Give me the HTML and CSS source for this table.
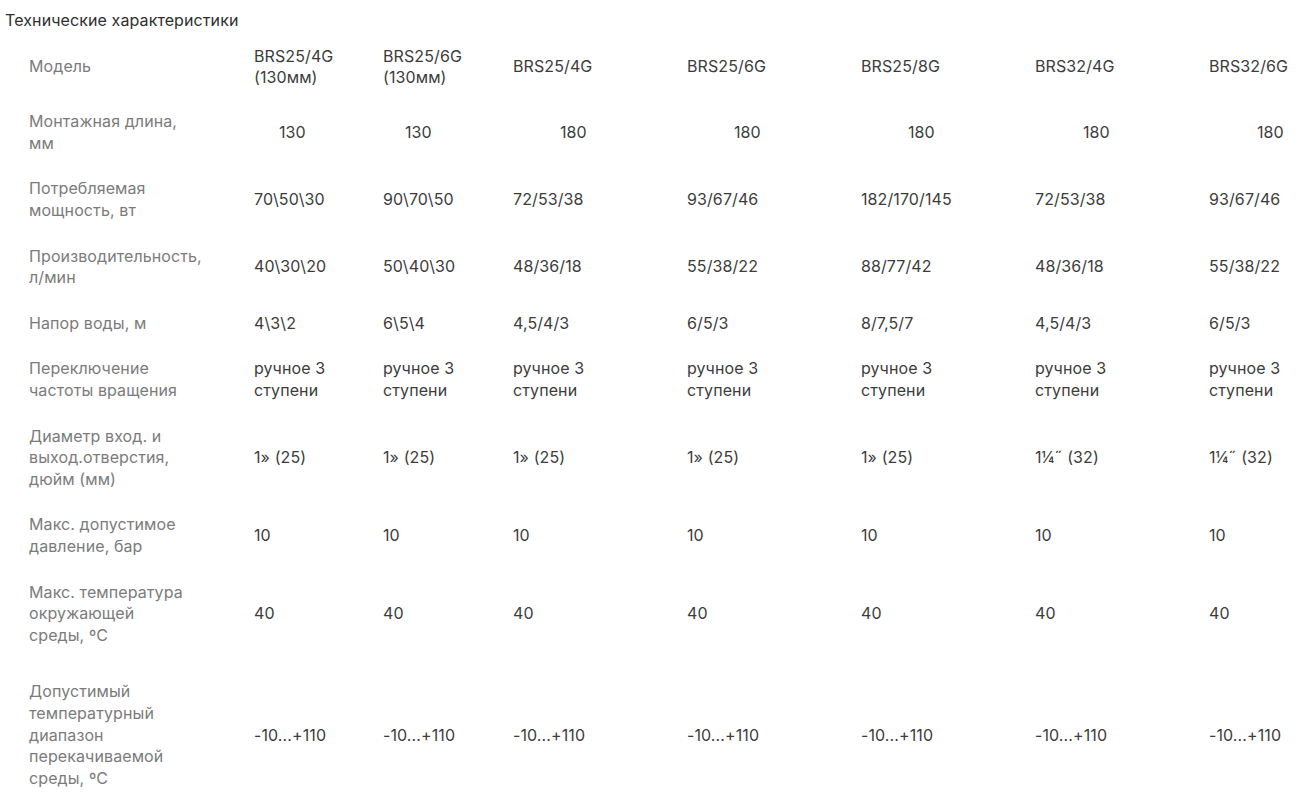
FILE: index.html
```html
<!DOCTYPE html>
<html lang="ru">
<head>
<meta charset="utf-8">
<title>Технические характеристики</title>
<link rel="stylesheet" href="styles.css">
</head>
<body>
<div class="page">
  <div class="title">Технические характеристики</div>
  <table class="specs">
    <colgroup>
      <col class="c-label">
      <col class="c-n1">
      <col class="c-n2">
      <col class="c-w">
      <col class="c-w">
      <col class="c-w">
      <col class="c-w">
      <col>
    </colgroup>
    <tbody>
      <tr class="first">
        <th><div class="lbl">Модель</div></th>
        <td><div class="val">BRS25/4G<br>(130мм)</div></td>
        <td><div class="val">BRS25/6G<br>(130мм)</div></td>
        <td><div class="val">BRS25/4G</div></td>
        <td><div class="val">BRS25/6G</div></td>
        <td><div class="val">BRS25/8G</div></td>
        <td><div class="val">BRS32/4G</div></td>
        <td><div class="val">BRS32/6G</div></td>
      </tr>
      <tr>
        <th><div class="lbl">Монтажная длина,<br>мм</div></th>
        <td><div class="val ind-a">130</div></td>
        <td><div class="val ind-b">130</div></td>
        <td><div class="val ind-c">180</div></td>
        <td><div class="val ind-c">180</div></td>
        <td><div class="val ind-c">180</div></td>
        <td><div class="val ind-d">180</div></td>
        <td><div class="val ind-d">180</div></td>
      </tr>
      <tr>
        <th><div class="lbl">Потребляемая<br>мощность, вт</div></th>
        <td><div class="val">70\50\30</div></td>
        <td><div class="val">90\70\50</div></td>
        <td><div class="val">72/53/38</div></td>
        <td><div class="val">93/67/46</div></td>
        <td><div class="val">182/170/145</div></td>
        <td><div class="val">72/53/38</div></td>
        <td><div class="val">93/67/46</div></td>
      </tr>
      <tr>
        <th><div class="lbl">Производительность,<br>л/мин</div></th>
        <td><div class="val">40\30\20</div></td>
        <td><div class="val">50\40\30</div></td>
        <td><div class="val">48/36/18</div></td>
        <td><div class="val">55/38/22</div></td>
        <td><div class="val">88/77/42</div></td>
        <td><div class="val">48/36/18</div></td>
        <td><div class="val">55/38/22</div></td>
      </tr>
      <tr>
        <th><div class="lbl">Напор воды, м</div></th>
        <td><div class="val">4\3\2</div></td>
        <td><div class="val">6\5\4</div></td>
        <td><div class="val">4,5/4/3</div></td>
        <td><div class="val">6/5/3</div></td>
        <td><div class="val">8/7,5/7</div></td>
        <td><div class="val">4,5/4/3</div></td>
        <td><div class="val">6/5/3</div></td>
      </tr>
      <tr>
        <th><div class="lbl">Переключение<br>частоты вращения</div></th>
        <td><div class="val">ручное 3<br>ступени</div></td>
        <td><div class="val">ручное 3<br>ступени</div></td>
        <td><div class="val">ручное 3<br>ступени</div></td>
        <td><div class="val">ручное 3<br>ступени</div></td>
        <td><div class="val">ручное 3<br>ступени</div></td>
        <td><div class="val">ручное 3<br>ступени</div></td>
        <td><div class="val">ручное 3<br>ступени</div></td>
      </tr>
      <tr>
        <th><div class="lbl">Диаметр вход. и<br>выход.отверстия,<br>дюйм (мм)</div></th>
        <td><div class="val">1» (25)</div></td>
        <td><div class="val">1» (25)</div></td>
        <td><div class="val">1» (25)</div></td>
        <td><div class="val">1» (25)</div></td>
        <td><div class="val">1» (25)</div></td>
        <td><div class="val">1¼˝ (32)</div></td>
        <td><div class="val">1¼˝ (32)</div></td>
      </tr>
      <tr>
        <th><div class="lbl">Макс. допустимое<br>давление, бар</div></th>
        <td><div class="val">10</div></td>
        <td><div class="val">10</div></td>
        <td><div class="val">10</div></td>
        <td><div class="val">10</div></td>
        <td><div class="val">10</div></td>
        <td><div class="val">10</div></td>
        <td><div class="val">10</div></td>
      </tr>
      <tr>
        <th><div class="lbl">Макс. температура<br>окружающей<br>среды, ºC</div></th>
        <td><div class="val">40</div></td>
        <td><div class="val">40</div></td>
        <td><div class="val">40</div></td>
        <td><div class="val">40</div></td>
        <td><div class="val">40</div></td>
        <td><div class="val">40</div></td>
        <td><div class="val">40</div></td>
      </tr>
      <tr class="last">
        <th><div class="lbl">Допустимый<br>температурный<br>диапазон<br>перекачиваемой<br>среды, ºC</div></th>
        <td><div class="val">-10...+110</div></td>
        <td><div class="val">-10...+110</div></td>
        <td><div class="val">-10...+110</div></td>
        <td><div class="val">-10...+110</div></td>
        <td><div class="val">-10...+110</div></td>
        <td><div class="val">-10...+110</div></td>
        <td><div class="val">-10...+110</div></td>
      </tr>
    </tbody>
  </table>
</div>
</body>
</html>
```

FILE: styles.css
```css
html, body {
  margin: 0;
  padding: 0;
  background: #ffffff;
}

body {
  font-family: Inter, "Noto Sans", "Liberation Sans", sans-serif;
  font-size: 16px;
  line-height: 21.6px;
  color: #3a3a3a;
  letter-spacing: 0.1px;
}

.page {
  padding: 10px 0 0 5px;
}

.title {
  color: #2e2e2e;
}

.specs {
  table-layout: fixed;
  border-collapse: collapse;
  width: 1294px;
  margin-top: 2px;
}

.c-label { width: 249px; }
.c-n1 { width: 129px; }
.c-n2 { width: 130px; }
.c-w { width: 174px; }

.specs th,
.specs td {
  padding: 12px 0;
  vertical-align: middle;
  text-align: left;
  font-weight: 400;
}

.specs th {
  padding-left: 24px;
}

.specs tr.first th,
.specs tr.first td {
  padding-bottom: 10.5px;
}

.specs tr.last th,
.specs tr.last td {
  padding-top: 23px;
}

.lbl {
  color: #7b7b7b;
  white-space: nowrap;
}

.val {
  color: #3c3c3c;
  white-space: nowrap;
}

.ind-a { padding-left: 25px; }
.ind-b { padding-left: 22px; }
.ind-c { padding-left: 47px; }
.ind-d { padding-left: 48px; }
```
